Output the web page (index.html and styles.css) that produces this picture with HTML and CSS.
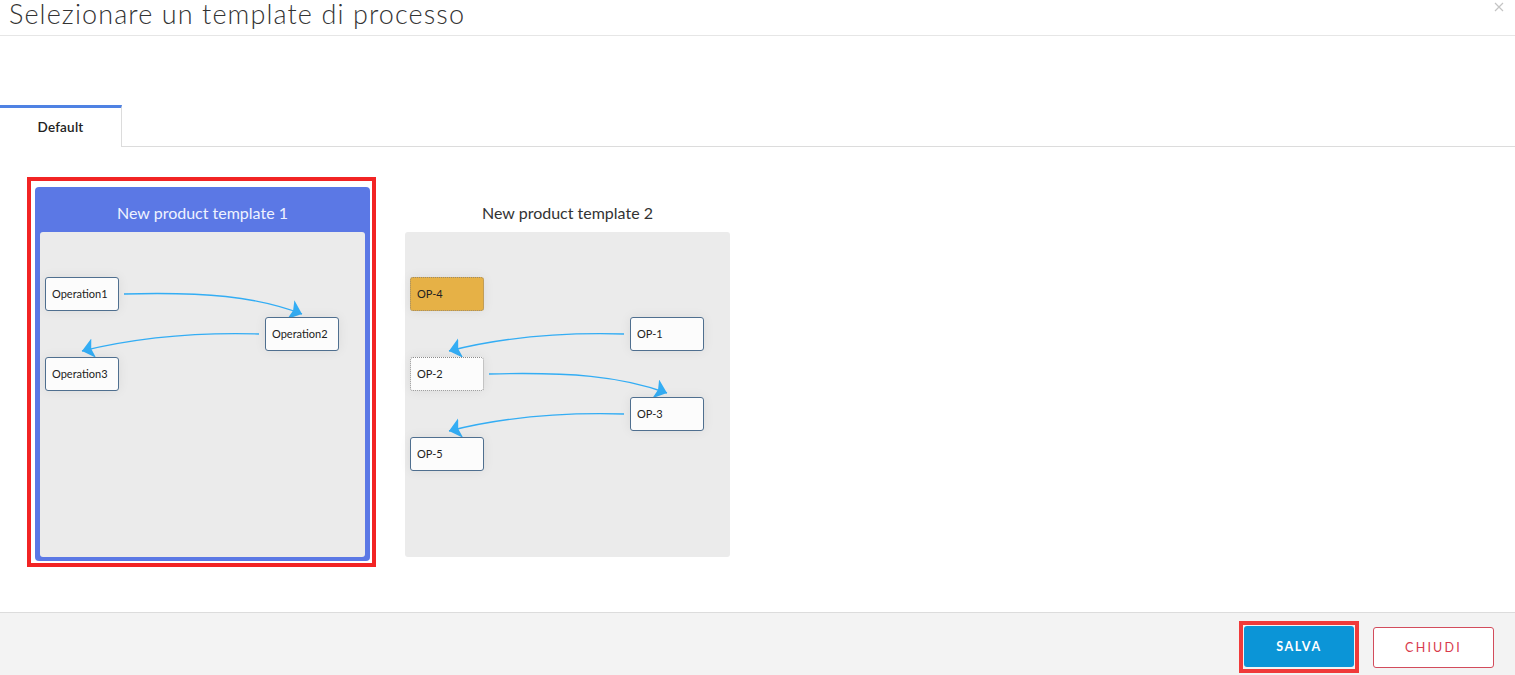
FILE: index.html
```html
<!DOCTYPE html>
<html lang="it">
<head>
<meta charset="utf-8">
<title>Selezionare un template di processo</title>
<link rel="stylesheet" href="styles.css">
</head>
<body>
<div class="dialog">
  <header class="dlg-header">
    <h1 class="dlg-title">Selezionare un template di processo</h1>
    <button class="dlg-close" aria-label="Chiudi">
      <svg width="10" height="10" viewBox="0 0 10 10"><path d="M1 1L9 9M9 1L1 9" stroke="#c4c4c4" stroke-width="1.2" fill="none"/></svg>
    </button>
  </header>

  <nav class="tabs">
    <div class="tab active">Default</div>
    <div class="tab-rest"></div>
  </nav>

  <main class="templates">
    <div class="card selected">
      <div class="card-title">New product template 1</div>
      <div class="canvas">
        <svg class="edges" width="325" height="325" viewBox="0 0 325 325">
          <defs>
            <marker id="ah1" markerUnits="userSpaceOnUse" markerWidth="16" markerHeight="22" refX="12" refY="10" orient="auto">
              <path d="M0,0 L12,10 L0,20 L2.5,10 Z" fill="#33adf4"/>
            </marker>
          </defs>
          <path d="M84,62 C165,60 215,64 262,82" stroke="#33adf4" stroke-width="1.4" fill="none" marker-end="url(#ah1)"/>
          <path d="M219,102 C150,100 95,106 42,119" stroke="#33adf4" stroke-width="1.4" fill="none" marker-end="url(#ah1)"/>
        </svg>
        <div class="node" style="left:5px;top:45px">Operation1</div>
        <div class="node" style="left:225px;top:85px">Operation2</div>
        <div class="node" style="left:5px;top:125px">Operation3</div>
      </div>
      <div class="sel-ring"></div>
    </div>

    <div class="card">
      <div class="card-title">New product template 2</div>
      <div class="canvas">
        <svg class="edges" width="325" height="325" viewBox="0 0 325 325">
          <defs>
            <marker id="ah2" markerUnits="userSpaceOnUse" markerWidth="16" markerHeight="22" refX="12" refY="10" orient="auto">
              <path d="M0,0 L12,10 L0,20 L2.5,10 Z" fill="#33adf4"/>
            </marker>
          </defs>
          <path d="M219,102 C150,100 95,106 44,119" stroke="#33adf4" stroke-width="1.4" fill="none" marker-end="url(#ah2)"/>
          <path d="M84,142 C165,140 215,144 262,161" stroke="#33adf4" stroke-width="1.4" fill="none" marker-end="url(#ah2)"/>
          <path d="M219,182 C150,180 95,186 44,199" stroke="#33adf4" stroke-width="1.4" fill="none" marker-end="url(#ah2)"/>
        </svg>
        <div class="node warn" style="left:5px;top:45px">OP-4</div>
        <div class="node" style="left:225px;top:85px">OP-1</div>
        <div class="node dotted" style="left:5px;top:125px">OP-2</div>
        <div class="node" style="left:225px;top:165px">OP-3</div>
        <div class="node" style="left:5px;top:205px">OP-5</div>
      </div>
    </div>
  </main>

  <footer class="dlg-footer">
    <div class="btn-wrap marked"><button class="btn btn-primary">SALVA</button></div>
    <button class="btn btn-outline">CHIUDI</button>
  </footer>
</div>
</body>
</html>
```

FILE: styles.css
```css
* { box-sizing: border-box; }
html, body { margin: 0; padding: 0; }
body {
  width: 1515px;
  height: 675px;
  overflow: hidden;
  background: #fff;
  font-family: Lato, "Noto Sans", sans-serif;
  color: #333;
}
.dialog {
  height: 675px;
  display: flex;
  flex-direction: column;
}
.dlg-header {
  height: 36px;
  border-bottom: 1px solid #e6e6e6;
  display: flex;
  justify-content: space-between;
  align-items: flex-start;
  padding-left: 9px;
}
.dlg-title {
  margin: 0;
  font-size: 27px;
  font-weight: 300;
  line-height: 28px;
  color: #333;
  letter-spacing: 1.1px;
}
.dlg-close {
  border: 0;
  background: none;
  padding: 0;
  margin: 2px 11px 0 0;
  width: 10px;
  height: 10px;
  display: block;
}
.dlg-close svg { display: block; }

.tabs {
  margin-top: 69px;
  display: flex;
  height: 42px;
}
.tab {
  width: 122px;
  border-top: 3px solid #4f82e3;
  border-right: 1px solid #dcdcdc;
  display: flex;
  align-items: center;
  justify-content: center;
  font-size: 13.5px;
  font-weight: 600;
  color: #222;
  padding-bottom: 2px;
  letter-spacing: 0.2px;
}
.tab-rest {
  flex: 1;
  border-bottom: 1px solid #dcdcdc;
}

.templates {
  display: flex;
  gap: 30px;
  padding: 40px 35px 0;
}
.card {
  position: relative;
  width: 335px;
  height: 374px;
  border-radius: 4px;
  padding: 0 5px 4px;
  display: flex;
  flex-direction: column;
}
.card.selected { background: #5b78e5; }
.card-title {
  height: 45px;
  display: flex;
  align-items: center;
  justify-content: center;
  padding-top: 5px;
  font-size: 16px;
  font-weight: 400;
  color: #333;
}
.card.selected .card-title { color: #eef2ff; }
.canvas {
  position: relative;
  flex: 1;
  background: #ebebeb;
  border-radius: 3px;
}
.edges {
  position: absolute;
  left: 0;
  top: 0;
  overflow: visible;
}
.node {
  position: absolute;
  width: 74px;
  height: 34px;
  background: #fcfcfc;
  border: 1px solid #4f6f8f;
  border-radius: 3px;
  box-shadow: 0 0 12px rgba(0, 0, 0, 0.07);
  font-size: 11px;
  line-height: 32px;
  padding-left: 6px;
  color: #222;
}
.node.warn {
  background: #e6b146;
  border: 1px dotted #9b8a6a;
}
.node.dotted {
  border: 1px dotted #8a8a8a;
}
.sel-ring {
  position: absolute;
  left: -8px;
  right: -6px;
  top: -10px;
  bottom: -6px;
  border: 4px solid #f22424;
  pointer-events: none;
}

.dlg-footer {
  margin-top: auto;
  height: 63px;
  border-top: 1px solid #dcdcdc;
  background: #f3f3f3;
  display: flex;
  justify-content: flex-end;
  align-items: flex-start;
  padding: 14px 21px 0 0;
  gap: 20px;
}
.btn-wrap.marked {
  margin-top: -6px;
  margin-right: -6px;
  margin-left: -6px;
  border: 4px solid #f03a3a;
  padding: 1px;
  height: 52px;
}
.btn {
  font-family: Lato, "Noto Sans", sans-serif;
  height: 41px;
  border-radius: 3px;
  font-size: 12.5px;
  cursor: pointer;
}
.btn-primary {
  width: 110px;
  background: #0b95d7;
  border: 0;
  color: #fff;
  font-weight: 700;
  letter-spacing: 1.6px;
  display: block;
}
.btn-outline {
  width: 121px;
  background: #fff;
  border: 1px solid #d24c5c;
  color: #d83a4c;
  letter-spacing: 2.2px;
  font-weight: 400;
}
```
